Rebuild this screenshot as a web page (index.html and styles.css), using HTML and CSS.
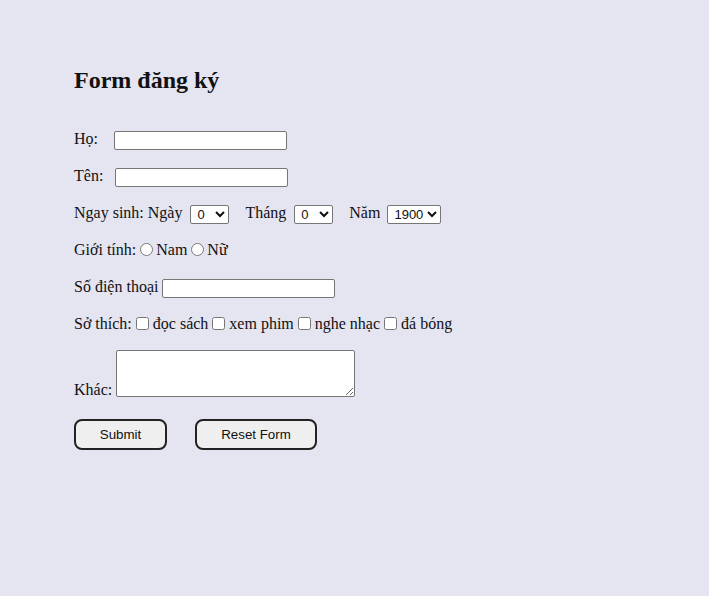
FILE: index.html
```html
<!DOCTYPE html>
<html lang="vi">
<head>
<meta charset="utf-8">
<title>Form đăng ký</title>
<link rel="stylesheet" href="styles.css">
</head>
<body>
<div class="wrap">
  <h2 class="title">Form đăng ký</h2>
  <form class="form">
    <p class="row"><span class="lbl lbl-ho">Họ:</span><input class="txt" type="text"></p>
    <p class="row"><span class="lbl lbl-ten">Tên:</span><input class="txt" type="text"></p>
    <p class="row">Ngay sinh: Ngày<select class="sel sel-s sel-d"><option>0</option></select><span class="sp">Tháng</span><select class="sel sel-s"><option>0</option></select><span class="sp">Năm</span><select class="sel sel-y"><option>1900</option></select></p>
    <p class="row">Giới tính:<input class="rad" type="radio" name="g">Nam<input class="rad" type="radio" name="g">Nữ</p>
    <p class="row">Số điện thoại <input class="txt" type="text"></p>
    <p class="row">Sở thích:<input class="chk" type="checkbox">đọc sách<input class="chk" type="checkbox">xem phim<input class="chk" type="checkbox">nghe nhạc<input class="chk" type="checkbox">đá bóng</p>
    <p class="row row-area">Khác: <textarea class="area"></textarea></p>
    <div class="btns">
      <button type="button" class="btn btn-submit">Submit</button>
      <button type="reset" class="btn btn-reset">Reset Form</button>
    </div>
  </form>
</div>
</body>
</html>
```
FILE: styles.css
```css
html, body {
  margin: 0;
  padding: 0;
  background: #e5e4f1;
}
body {
  font-family: "Liberation Serif", "Times New Roman", serif;
  font-size: 16px;
  color: #111;
}
.wrap {
  padding: 66px 74px 0;
}
.title {
  margin: 0;
  font-size: 24px;
  line-height: 28px;
  font-weight: bold;
}
.form {
  margin-top: 34px;
}
.row {
  margin: 0 0 16px;
  line-height: 22px;
  height: 21px;
  white-space: nowrap;
}
.lbl {
  display: inline-block;
}
.lbl-ho { width: 40px; }
.lbl-ten { width: 41px; }
.txt {
  box-sizing: border-box;
  width: 173px;
  height: 19px;
  border: 1px solid #767676;
  border-radius: 2px;
  background: #fff;
  margin: 0;
  padding: 1px 2px;
  vertical-align: middle;
  font-family: "Liberation Sans", Arial, sans-serif;
  font-size: 13px;
}
.sel {
  box-sizing: border-box;
  height: 19px;
  border: 1px solid #767676;
  border-radius: 2px;
  background: #fff;
  font-family: "Liberation Sans", Arial, sans-serif;
  font-size: 13px;
  margin: 0;
  padding: 0 0 0 2px;
  vertical-align: middle;
  color: #111;
}
.sel-d { margin-left: 8px; }
.sel-s { width: 39px; }
.sel-y { width: 54px; margin-left: -1px; }
.sp {
  margin: 0 8px 0 16px;
}
.rad {
  margin: 0 3px 0 4px;
  width: 13px;
  height: 13px;
  vertical-align: -1px;
}
.chk {
  margin: 0 4px 0 4px;
  width: 13px;
  height: 13px;
  vertical-align: -1px;
}
.row-area {
  height: 48px;
  margin-bottom: 17px;
  margin-top: 20px;
}
.area {
  box-sizing: border-box;
  width: 239px;
  height: 47px;
  border: 1px solid #767676;
  border-radius: 2px;
  background: #fff;
  margin: 0;
  vertical-align: bottom;
  position: relative;
  top: -4px;
}
.btns {
  display: flex;
  gap: 28px;
}
.btn {
  box-sizing: border-box;
  height: 31px;
  border: 2px solid #222;
  border-radius: 8px;
  background: #efefef;
  font-family: "Liberation Sans", Arial, sans-serif;
  font-size: 13.33px;
  color: #111;
  padding: 0;
}
.btn-submit { width: 93px; }
.btn-reset { width: 122px; }
```
